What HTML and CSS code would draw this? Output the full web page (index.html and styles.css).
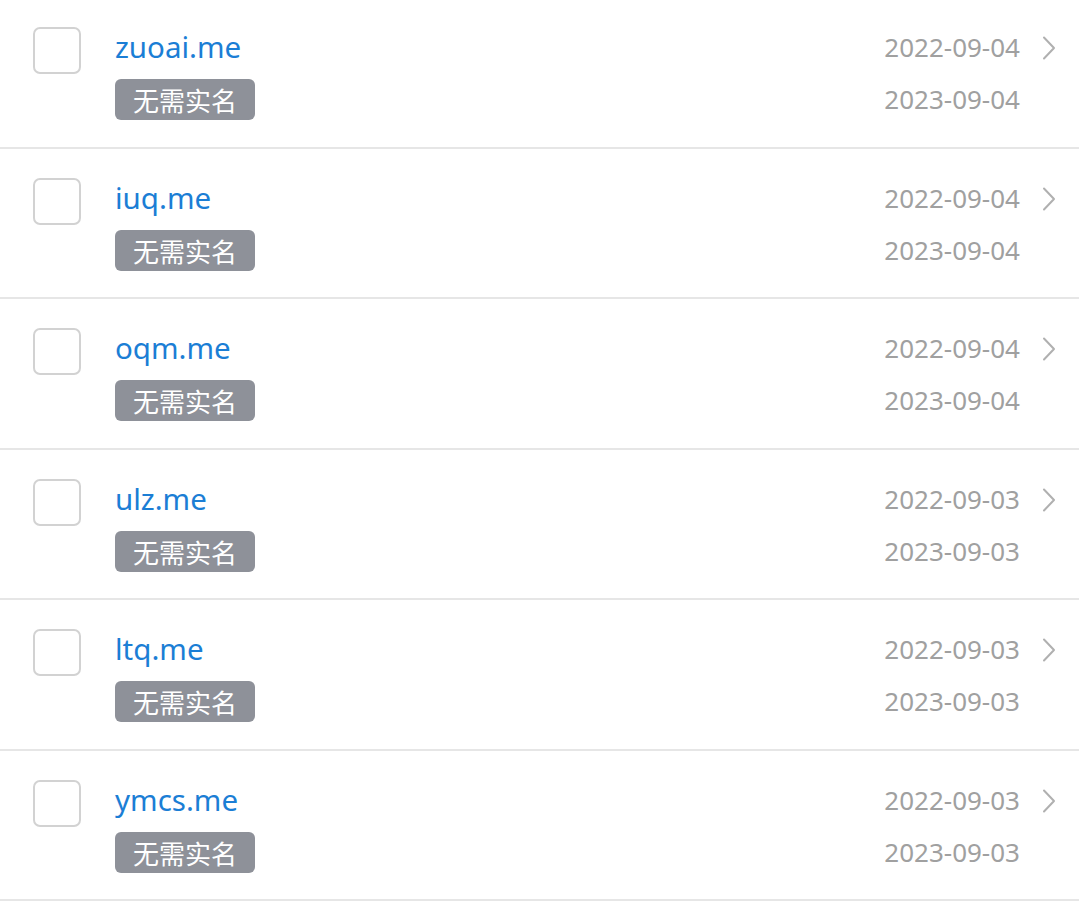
FILE: index.html
```html
<!DOCTYPE html>
<html lang="zh-CN">
<head>
<meta charset="utf-8">
<title>域名列表</title>
<link rel="stylesheet" href="styles.css">
</head>
<body>
<ul class="domain-list">
  <li class="domain-row">
    <span class="check"></span>
    <div class="info">
      <div class="name">zuoai.me</div>
      <span class="tag">无需实名</span>
    </div>
    <div class="dates">
      <div class="date">2022-09-04</div>
      <div class="date">2023-09-04</div>
    </div>
    <svg class="chev" viewBox="0 0 14 24" width="14" height="24"><path d="M2 1.5 L12 12 L2 22.5" fill="none" stroke="#b0b0b0" stroke-width="2" stroke-linecap="round" stroke-linejoin="round"/></svg>
  </li>
  <li class="domain-row">
    <span class="check"></span>
    <div class="info">
      <div class="name">iuq.me</div>
      <span class="tag">无需实名</span>
    </div>
    <div class="dates">
      <div class="date">2022-09-04</div>
      <div class="date">2023-09-04</div>
    </div>
    <svg class="chev" viewBox="0 0 14 24" width="14" height="24"><path d="M2 1.5 L12 12 L2 22.5" fill="none" stroke="#b0b0b0" stroke-width="2" stroke-linecap="round" stroke-linejoin="round"/></svg>
  </li>
  <li class="domain-row">
    <span class="check"></span>
    <div class="info">
      <div class="name">oqm.me</div>
      <span class="tag">无需实名</span>
    </div>
    <div class="dates">
      <div class="date">2022-09-04</div>
      <div class="date">2023-09-04</div>
    </div>
    <svg class="chev" viewBox="0 0 14 24" width="14" height="24"><path d="M2 1.5 L12 12 L2 22.5" fill="none" stroke="#b0b0b0" stroke-width="2" stroke-linecap="round" stroke-linejoin="round"/></svg>
  </li>
  <li class="domain-row">
    <span class="check"></span>
    <div class="info">
      <div class="name">ulz.me</div>
      <span class="tag">无需实名</span>
    </div>
    <div class="dates">
      <div class="date">2022-09-03</div>
      <div class="date">2023-09-03</div>
    </div>
    <svg class="chev" viewBox="0 0 14 24" width="14" height="24"><path d="M2 1.5 L12 12 L2 22.5" fill="none" stroke="#b0b0b0" stroke-width="2" stroke-linecap="round" stroke-linejoin="round"/></svg>
  </li>
  <li class="domain-row">
    <span class="check"></span>
    <div class="info">
      <div class="name">ltq.me</div>
      <span class="tag">无需实名</span>
    </div>
    <div class="dates">
      <div class="date">2022-09-03</div>
      <div class="date">2023-09-03</div>
    </div>
    <svg class="chev" viewBox="0 0 14 24" width="14" height="24"><path d="M2 1.5 L12 12 L2 22.5" fill="none" stroke="#b0b0b0" stroke-width="2" stroke-linecap="round" stroke-linejoin="round"/></svg>
  </li>
  <li class="domain-row">
    <span class="check"></span>
    <div class="info">
      <div class="name">ymcs.me</div>
      <span class="tag">无需实名</span>
    </div>
    <div class="dates">
      <div class="date">2022-09-03</div>
      <div class="date">2023-09-03</div>
    </div>
    <svg class="chev" viewBox="0 0 14 24" width="14" height="24"><path d="M2 1.5 L12 12 L2 22.5" fill="none" stroke="#b0b0b0" stroke-width="2" stroke-linecap="round" stroke-linejoin="round"/></svg>
  </li>
</ul>
</body>
</html>
```

FILE: styles.css
```css
html, body {
  margin: 0;
  padding: 0;
  background: #ffffff;
}

body {
  font-family: "Noto Sans", "Noto Sans CJK SC", sans-serif;
  overflow: hidden;
}

.domain-list {
  list-style: none;
  margin: -2px 0 0 0;
  padding: 0;
}

.domain-row {
  display: flex;
  align-items: flex-start;
  height: 148.5px;
  box-sizing: content-box;
  border-bottom: 2px solid #e6e6e6;
  padding: 0 23px 0 33px;
}

.check {
  flex: none;
  width: 44px;
  height: 43px;
  margin-top: 29px;
  border: 2px solid #d2d2d2;
  border-radius: 7px;
}

.info {
  flex: 1;
  display: flex;
  flex-direction: column;
  align-items: flex-start;
  padding-left: 34px;
  padding-top: 29px;
}

.name {
  font-size: 29.5px;
  line-height: 40px;
  color: #1b7ed5;
}

.tag {
  margin-top: 12px;
  height: 41px;
  line-height: 41px;
  padding: 0 18px;
  background: #8e9199;
  color: #ffffff;
  border-radius: 6px;
  font-family: "Noto Sans CJK SC", sans-serif;
  font-size: 26px;
}

.dates {
  display: flex;
  flex-direction: column;
  align-items: flex-end;
  padding-top: 29px;
  gap: 12px;
}

.date {
  font-size: 26px;
  line-height: 40px;
  color: #a0a0a0;
}

.chev {
  flex: none;
  margin-top: 38px;
  margin-left: 22px;
}
```
